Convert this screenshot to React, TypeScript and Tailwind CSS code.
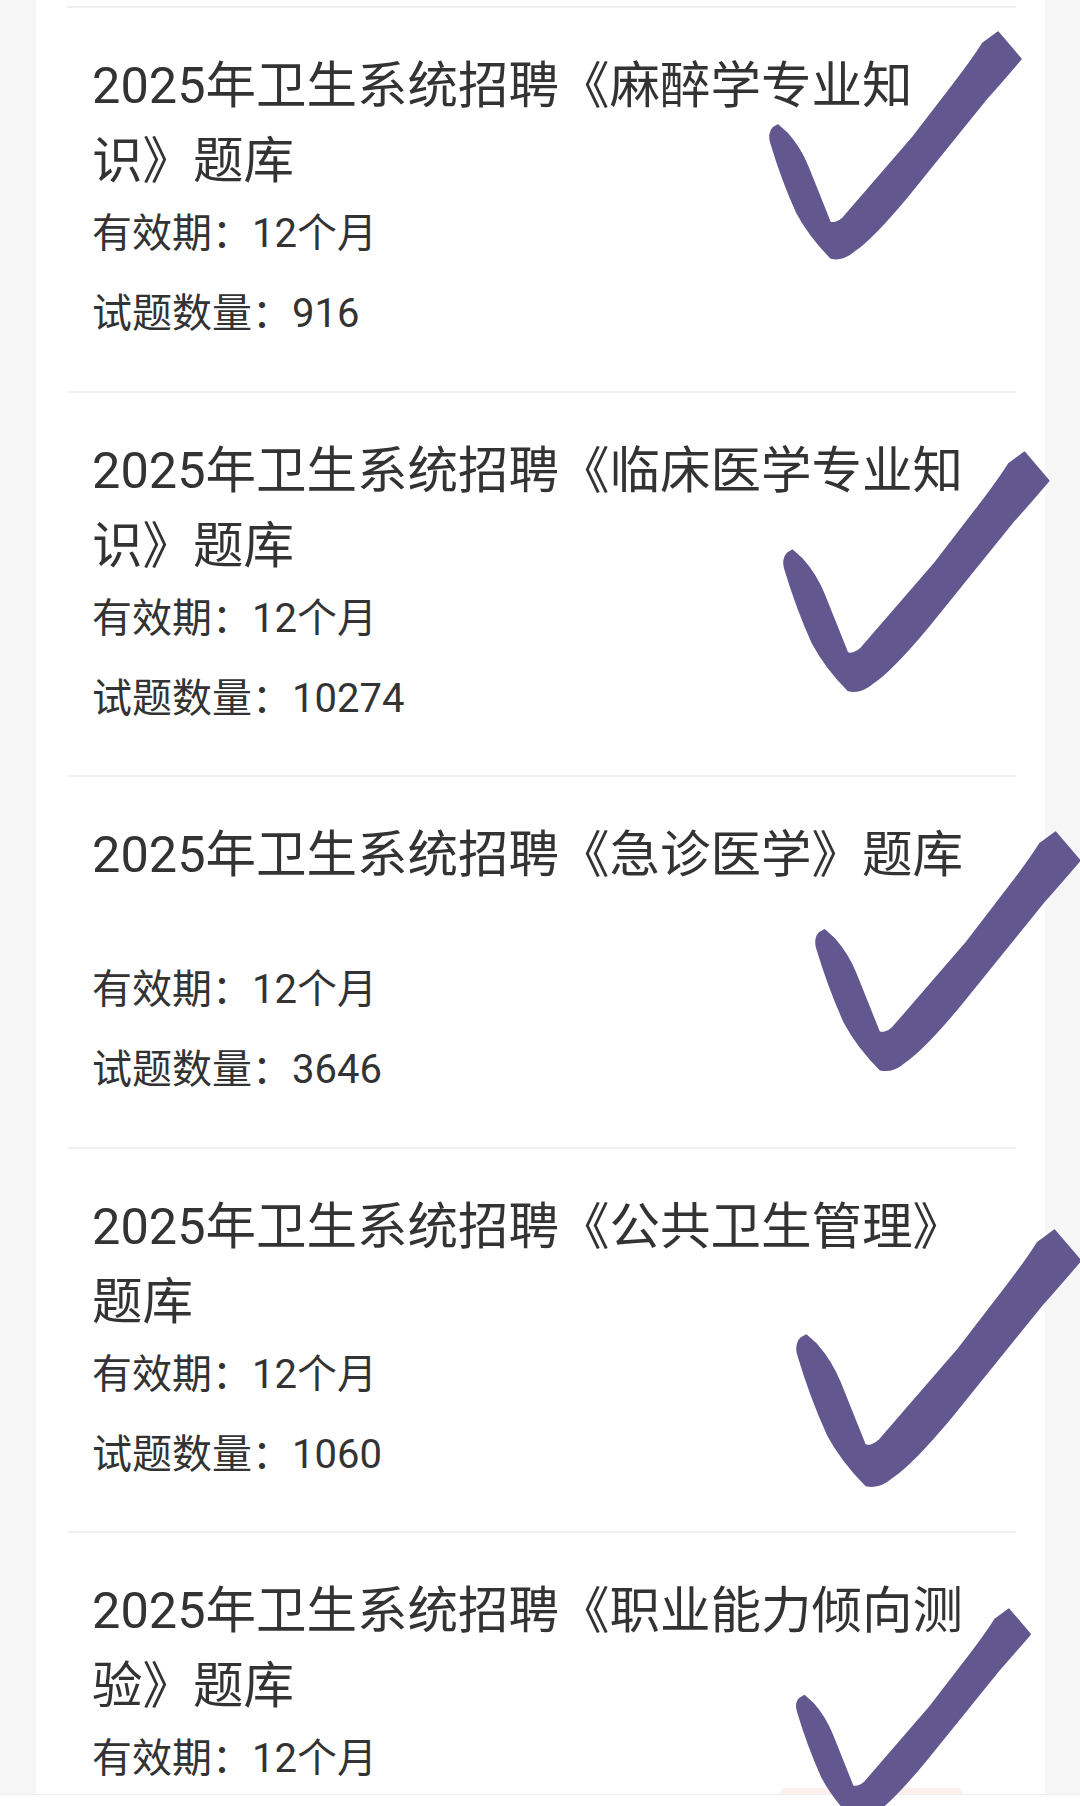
import React from "react";

type Item = { title: string; months: string; count: string };

const items: Item[] = [
  { title: "2025年卫生系统招聘《麻醉学专业知识》题库", months: "12个月", count: "916" },
  { title: "2025年卫生系统招聘《临床医学专业知识》题库", months: "12个月", count: "10274" },
  { title: "2025年卫生系统招聘《急诊医学》题库", months: "12个月", count: "3646" },
  { title: "2025年卫生系统招聘《公共卫生管理》题库", months: "12个月", count: "1060" },
  { title: "2025年卫生系统招聘《职业能力倾向测验》题库", months: "12个月", count: "2360" },
];

const CHECK_PATH =
  "M229 1 L252 28 C240 42 228 56 218 67 L138 166 C118 190 100 210 85 220 C78 226 70 229 62 227 C50 215 36 197 28 182 C18 160 8 132 2 112 C0 106 1 100 4 97 L9 94 L18 102 C26 111 33 121 39 136 L61 191 C64 193 70 191 74 187 L144 106 L184 54 C194 41 204 28 214 12 Z";

function Check({ className }: { className: string }) {
  return (
    <svg viewBox="0 0 256 232" className={className} aria-hidden="true">
      <path d={CHECK_PATH} fill="#62588f" stroke="#62588f" strokeWidth="1.5" strokeLinejoin="round" />
    </svg>
  );
}

function Row({ item }: { item: Item }) {
  return (
    <div className="flex flex-col border-t-2 border-[#f0f0f0] pl-[25px] pr-[40px] pt-[40px] pb-[40.5px] text-[#333333]">
      <div className="min-h-[137px] text-[50.5px] leading-[75px]">{item.title}</div>
      <div className="flex flex-col gap-[8px] text-[40px] leading-[72px]">
        <div>有效期：{item.months}</div>
        <div>试题数量：{item.count}</div>
      </div>
    </div>
  );
}

export default function App() {
  return (
    <div
      className="relative flex h-[1806px] w-[1080px] flex-col overflow-hidden bg-[#f6f6f6]"
      style={{ fontFamily: "Roboto, 'Noto Sans CJK SC', sans-serif" }}
    >
      <div className="flex min-h-0 flex-1 overflow-hidden pl-[36px] pr-[35px]">
        <div className="flex flex-1 flex-col bg-white pl-[31px] pr-[29px] pt-[6px]">
          {items.map((it, i) => (
            <Row key={i} item={it} />
          ))}
        </div>
      </div>

      {/* bottom bar with a faint button peeking above it */}
      <div className="relative h-[12px] shrink-0 border-t border-[#eeeeee] bg-white">
        <div className="absolute -top-[7px] left-[780px] h-[6px] w-[183px] rounded-t-full bg-[#fcefec]" />
      </div>

      {/* hand-drawn check marks lying over the list */}
      <Check className="absolute left-[769px] top-[31px] h-[232px] w-[256px]" />
      <Check className="absolute left-[783px] top-[451px] h-[245px] w-[270px]" />
      <Check className="absolute left-[815px] top-[831px] h-[244px] w-[269px]" />
      <Check className="absolute left-[796px] top-[1229px] h-[262px] w-[289px]" />
      <Check className="absolute left-[796px] top-[1608px] h-[216px] w-[238px]" />
    </div>
  );
}
